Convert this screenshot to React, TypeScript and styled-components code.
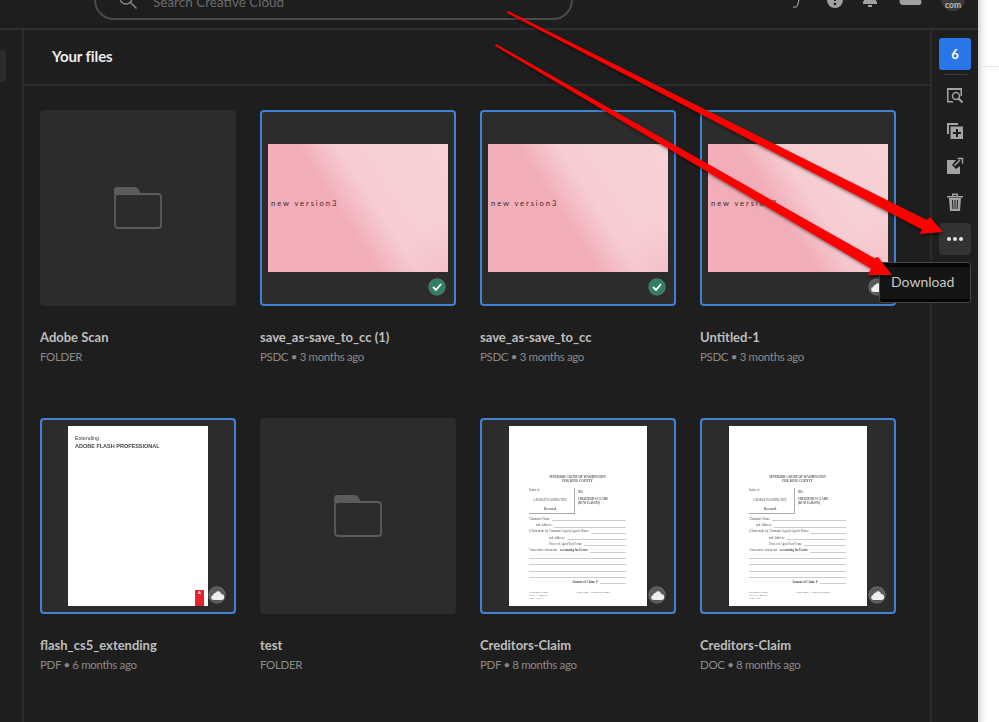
import React from "react";
import styled, { createGlobalStyle } from "styled-components";

const Global = createGlobalStyle`
  html, body { margin: 0; padding: 0; background: #fff; overflow: hidden; }
  * { box-sizing: border-box; }
`;
const Stage = styled.div`
  position: relative; width: 999px; height: 722px; overflow: hidden; display: flex;
  font-family: Lato, "Open Sans", sans-serif;
`;
const AppShell = styled.div`
  width: 978px; height: 722px; background: #1e1e1e; display: flex; flex-direction: column;
`;
const Margin = styled.div`
  flex: 1; position: relative;
  background: linear-gradient(90deg, #d4d4d4 0, #f0f0f0 4px, #fff 9px);
  &::after { content: ""; display: block; height: 1px; background: #e6e6e6; margin-top: 66px; }
`;
const TopBar = styled.header`
  height: 30px; flex: none; border-bottom: 2px solid #2f2f2f; position: relative; overflow: hidden;
  display: flex; align-items: flex-end; padding: 0 0 8px 94px;
`;
const Search = styled.div`
  width: 479px; height: 40px; flex: none; border: 2px solid #4a4a4a; border-radius: 20px;
  display: flex; align-items: flex-end; padding: 0 0 7px 22px; gap: 15px;
  color: #6a6a6a; font-size: 13.5px; line-height: 18px;
`;
const SearchGlyph = styled.svg`flex: none; margin-bottom: 1px;`;
const TopIcons = styled.div`
  margin-left: auto; display: flex; align-items: flex-end; margin-bottom: 12px;
`;
const TopIcon = styled.span<{ $w: number; $drop?: number }>`
  display: block; width: ${(p) => p.$w}px; flex: none; line-height: 0; margin-bottom: ${(p) => p.$drop ?? 0}px;
  svg { display: block; margin: 0 auto; }
`;
const Avatar = styled.div`
  width: 24px; height: 24px; border-radius: 50%; background: #3a3a3a; color: #bdbdbd; flex: none;
  font-size: 8.5px; font-weight: 700; display: flex; align-items: flex-end; justify-content: center;
  line-height: 12px; padding-bottom: 0; margin: 0 13px -3px 0;
`;
const Body = styled.div`flex: 1; display: flex; min-height: 0;`;
const LeftRail = styled.aside`
  width: 24px; flex: none; border-right: 2px solid #2b2b2b; padding-top: 20px;
`;
const RailNub = styled.div`width: 6px; height: 32px; background: #2c2c2c; border-radius: 0 3px 3px 0;`;
const Content = styled.main`flex: 1; min-width: 0; display: flex; flex-direction: column;`;
const TitleBar = styled.div`
  height: 56px; flex: none; border-bottom: 2px solid #2b2b2b; padding-left: 28px;
  display: flex; align-items: center; font-size: 15px; font-weight: 700; color: #ececec; letter-spacing: -0.1px;
  padding-bottom: 2px;
`;
const Grid = styled.div`
  display: grid; grid-template-columns: repeat(4, 196px); column-gap: 24px; row-gap: 50px;
  padding: 24px 0 0 16px;
`;
const Card = styled.article`display: flex; flex-direction: column; height: 258px;`;
const Thumb = styled.div<{ $selected?: boolean }>`
  position: relative; width: 196px; height: 196px; flex: none; background: #2c2c2c; border-radius: 4px;
  border: 2px solid ${(p) => (p.$selected ? "#3f82d6" : "transparent")};
  display: flex; align-items: center; justify-content: center;
`;
const Name = styled.div`
  margin-top: 22px; font-size: 13px; line-height: 18px; font-weight: 700; color: #bebebe; white-space: nowrap;
`;
const Meta = styled.div`
  margin-top: 3px; font-size: 11.5px; line-height: 16px; color: #8a8a8a; white-space: nowrap; letter-spacing: -0.35px;
`;
const Pink = styled.div`
  width: 180px; height: 128px; display: flex; align-items: center; padding: 0 0 10px 3px;
  font-size: 7.5px; letter-spacing: 1.95px; color: #3c282b; white-space: nowrap;
  background:
    radial-gradient(50px 50px at 100% 100%, rgba(241,170,185,.4), transparent),
    linear-gradient(57deg, #f1aeb8 0%, #f1aeb8 42%, #f7cdd3 58%, #f8d2d7 100%);
`;
const Badge = styled.span<{ $tone: "ok" | "cloud" }>`
  position: absolute; right: 9px; bottom: 9px; width: 16px; height: 16px; border-radius: 50%;
  background: ${(p) => (p.$tone === "ok" ? "#2f7f62" : "#5a5a5a")};
  box-shadow: 0 0 0 0.5px #888;
  display: flex; align-items: center; justify-content: center;
`;
const Sheet = styled.div<{ $w: number }>`
  width: ${(p) => p.$w}px; height: 180px; background: #fff; position: relative; color: #333;
  font-family: "Liberation Serif", serif;
`;
const FlashCover = styled.div`padding: 9px 7px; font-family: "Liberation Sans", sans-serif; color: #444; filter: blur(0.25px);`;
const CoverSmall = styled.div`font-size: 5.6px; line-height: 7px; letter-spacing: -0.1px;`;
const CoverBig = styled.div`font-size: 5.5px; line-height: 8px; font-weight: 700; white-space: nowrap;`;
const AdobeTag = styled.div`
  position: absolute; right: 4px; bottom: 0; width: 9px; height: 16px; background: #e8212b; color: #fff;
  font: 700 4px/6px "Liberation Sans", sans-serif; text-align: center;
`;
const DocPage = styled.div`
  padding: 49px 21px 0 20px; display: flex; flex-direction: column; height: 100%; filter: blur(0.3px);
`;
const DocHead = styled.div`font-size: 3.2px; line-height: 4px; font-weight: 700; text-align: center; white-space: nowrap; color: #555;`;
const Caption = styled.div`display: flex; margin-top: 5px; height: 27px;`;
const CaptionBox = styled.div`
  width: 46px; height: 26px; border-right: 1px solid #aaa; border-bottom: 1px solid #aaa;
  font-size: 3px; line-height: 4px; white-space: nowrap; display: flex; flex-direction: column; justify-content: space-between; padding-bottom: 2px; color: #555;
`;
const CaptionSide = styled.div`
  padding: 3px 0 0 3px; font-size: 3px; line-height: 3.5px; color: #555; white-space: nowrap; font-weight: 700;
`;
const DocRow = styled.div<{ $indent?: number }>`
  display: flex; align-items: flex-end; height: 6.3px; gap: 2px; padding-left: ${(p) => p.$indent ?? 0}px;
  font-size: 3px; line-height: 3.5px; white-space: nowrap; color: #555;
  &::after { content: ""; flex: 1; border-bottom: 1px solid #ccc; }
`;
const DocFooter = styled.div`
  display: flex; justify-content: space-between; margin-top: 7px; padding-right: 16px;
  font-size: 2.8px; line-height: 3px; color: #666;
`;
const RightRail = styled.aside`
  width: 48px; flex: none; border-left: 2px solid #2b2b2b; display: flex; flex-direction: column; align-items: center; padding-top: 8px;
`;
const CountTile = styled.div`
  width: 32px; height: 32px; border-radius: 3px; background: #2a75e8; color: #fff; font-size: 13px; font-weight: 700;
  display: flex; align-items: center; justify-content: center;
`;
const RailRule = styled.div`width: 24px; height: 1px; background: #3c3c3c; margin: 4px 0 4px;`;
const RailButton = styled.div<{ $active?: boolean }>`
  width: 32px; height: 32px; flex: none; border-radius: 4px; margin-bottom: 3.5px;
  margin-top: ${(p) => (p.$active ? "2px" : "0")}; background: ${(p) => (p.$active ? "#333" : "transparent")};
  display: flex; align-items: center; justify-content: center;
`;
const Tip = styled.div`
  position: absolute; left: 879px; top: 262px; width: 92px; height: 41px;
  background: linear-gradient(#050505 0 4px, #151515 4px 36px, #050505 36px);
  border: 1px solid #444; border-radius: 3px; color: #c8c8c8; font-size: 14px; padding: 0 0 2px 11px;
  display: flex; align-items: center;
`;
const Arrows = styled.svg`position: absolute; left: 0; top: 0; pointer-events: none;`;
const ArrowHeads = styled.g`fill: #ff0000; filter: drop-shadow(1px 2px 1.5px rgba(0,0,0,.5));`;

const Cloud = () => (
  <svg width="13" height="9" viewBox="0 0 13 9"><path fill="#eee" d="M2.600 9A2.600 2.600 0 0 1 2.100 3.900 3.200 3.200 0 0 1 5 1.500c.5-1 1.500-1.500 2.500-1.300 1.500.2 2.400 1.300 2.500 2.800A3 3 0 0 1 10.400 9Z" /></svg>
);
const Check = () => (
  <svg width="10" height="8" viewBox="0 0 10 8"><path d="M1 4l3 3 5-6" fill="none" stroke="#fff" strokeWidth="1.800" /></svg>
);
const Folder = () => (
  <svg width="48" height="42" viewBox="0 0 48 42">
    <path d="M0 7V3a3 3 0 0 1 3-3h18a4 4 0 0 1 3 1.500L27 7Z" fill="#5c5c5c" />
    <rect x="1" y="7" width="46" height="34" rx="3" fill="none" stroke="#5c5c5c" strokeWidth="1.800" />
  </svg>
);
const DocThumb = () => (
  <Sheet $w={138}>
    <DocPage>
      <DocHead>SUPERIOR COURT OF WASHINGTON<br />FOR KING COUNTY</DocHead>
      <Caption>
        <CaptionBox>
          <span>Estate of</span>
          <span>&nbsp;&nbsp;&nbsp;&nbsp;&nbsp;&nbsp;GEORGE WASHINGTON,</span>
          <span>&nbsp;&nbsp;&nbsp;&nbsp;&nbsp;&nbsp;&nbsp;&nbsp;&nbsp;&nbsp;&nbsp;&nbsp;&nbsp;&nbsp;&nbsp;&nbsp;&nbsp;&nbsp;&nbsp;&nbsp;<b>Deceased.</b></span>
        </CaptionBox>
        <CaptionSide>NO.<br /><br />CREDITOR'S CLAIM<br />(RCW 11.40.070)</CaptionSide>
      </Caption>
      <DocRow>Claimant's Name:</DocRow>
      <DocRow $indent={7}>and Address:</DocRow>
      <DocRow>(Claim made by Claimant's Agent) Agent's Name:</DocRow>
      <DocRow $indent={20}>and Address:</DocRow>
      <DocRow $indent={20}>Power of Agent/Fact Form:</DocRow>
      <DocRow>Consecutive statements <b>&nbsp;accounting for Estate:</b></DocRow>
      <DocRow /><DocRow /><DocRow /><DocRow />
      <DocRow $indent={43}><b>Amount of Claim: $</b></DocRow>
      <DocFooter><span>Creditor's Claim<br />RCW 11.40.070<br />Page 1 of 1</span><span>Print Name, Address &amp; Phone</span></DocFooter>
    </DocPage>
  </Sheet>
);
const FlashThumb = () => (
  <Sheet $w={140}>
    <FlashCover>
      <CoverSmall>Extending</CoverSmall>
      <CoverBig>ADOBE FLASH PROFESSIONAL</CoverBig>
    </FlashCover>
    <AdobeTag>A</AdobeTag>
  </Sheet>
);

type File = { name: string; meta: string; kind: "folder" | "pink" | "flash" | "doc"; badge?: "ok" | "cloud" };
const files: File[] = [
  { name: "Adobe Scan", meta: "FOLDER", kind: "folder" },
  { name: "save_as-save_to_cc (1)", meta: "PSDC • 3 months ago", kind: "pink", badge: "ok" },
  { name: "save_as-save_to_cc", meta: "PSDC • 3 months ago", kind: "pink", badge: "ok" },
  { name: "Untitled-1", meta: "PSDC • 3 months ago", kind: "pink", badge: "cloud" },
  { name: "flash_cs5_extending", meta: "PDF • 6 months ago", kind: "flash", badge: "cloud" },
  { name: "test", meta: "FOLDER", kind: "folder" },
  { name: "Creditors-Claim", meta: "PDF • 8 months ago", kind: "doc", badge: "cloud" },
  { name: "Creditors-Claim", meta: "DOC • 8 months ago", kind: "doc", badge: "cloud" },
];

const g = "#a3a3a3";

export default function App() {
  return (
    <>
      <Global />
      <Stage>
        <AppShell>
          <TopBar>
            <Search>
              <SearchGlyph width="20" height="20" viewBox="0 0 20 20"><circle cx="8" cy="8" r="6" fill="none" stroke="#8a8a8a" strokeWidth="1.400" /><path d="M12.500 12.500l6 6" stroke="#8a8a8a" strokeWidth="1.400" /></SearchGlyph>
              <span>Search Creative Cloud</span>
            </Search>
            <TopIcons>
              <TopIcon $w={26}><svg width="12" height="14" viewBox="0 0 12 14"><path d="M9 0C8 4 8 9 6 12c-.8 1.200-2 1.500-4 1" fill="none" stroke="#8e8e8e" strokeWidth="1.300" /></svg></TopIcon>
              <TopIcon $w={50}><svg width="16" height="16" viewBox="0 0 16 16"><circle cx="8" cy="8" r="8" fill="#a0a0a0" /><rect x="7" y="3" width="2" height="6" fill="#1e1e1e" /><circle cx="8" cy="12" r="1.300" fill="#1e1e1e" /></svg></TopIcon>
              <TopIcon $w={20}><svg width="18" height="18" viewBox="0 0 18 18"><path d="M9 0c3 0 4 2.500 4 5 0 3.500 2 5 3 7H2c1-2 3-3.500 3-7 0-2.500 1-5 4-5Z" fill="#a0a0a0" /><rect x="2" y="12" width="14" height="2" fill="#a0a0a0" /><rect x="7" y="15" width="4" height="2" fill="#a0a0a0" /></svg></TopIcon>
              <TopIcon $w={61} $drop={1}><svg width="24" height="16" viewBox="0 0 24 16"><path d="M4 14a3 3 0 0 1 0-7C6 2 10 0 14 1c4 .5 6 3 6 6 3 .5 3.500 7 0 7Z" fill="#a0a0a0" /></svg></TopIcon>
              <Avatar>com</Avatar>
            </TopIcons>
          </TopBar>
          <Body>
            <LeftRail><RailNub /></LeftRail>
            <Content>
              <TitleBar>Your files</TitleBar>
              <Grid>
                {files.map((f, i) => (
                  <Card key={i}>
                    <Thumb $selected={f.kind !== "folder"}>
                      {f.kind === "folder" && <Folder />}
                      {f.kind === "pink" && <Pink>new version3</Pink>}
                      {f.kind === "flash" && <FlashThumb />}
                      {f.kind === "doc" && <DocThumb />}
                      {f.badge && <Badge $tone={f.badge}>{f.badge === "ok" ? <Check /> : <Cloud />}</Badge>}
                    </Thumb>
                    <Name>{f.name}</Name>
                    <Meta>{f.meta}</Meta>
                  </Card>
                ))}
              </Grid>
            </Content>
            <RightRail>
              <CountTile>6</CountTile>
              <RailRule />
              <RailButton>
                <svg width="18" height="18" viewBox="0 0 18 18"><path d="M1 2h15v2H1ZM1 4h1.500v11H7v1.500H1ZM16 4h-1.500v6H16Z" fill={g} /><circle cx="10" cy="10" r="3.500" fill="none" stroke={g} strokeWidth="1.500" /><path d="M12.500 12.500l4 4" stroke={g} strokeWidth="2" /></svg>
              </RailButton>
              <RailButton>
                <svg width="18" height="18" viewBox="0 0 18 18"><path d="M1 1h11v2H3v9H1Z" fill={g} /><path d="M4.500 4.500H17V17H4.500Z" fill={g} /><path d="M10 7h2v3h3v2h-3v3h-2v-3H7v-2h3Z" fill="#1e1e1e" /></svg>
              </RailButton>
              <RailButton>
                <svg width="18" height="18" viewBox="0 0 18 18"><path d="M1 3h9L6 8l4 4 4-3v8H1Z" fill={g} /><path d="M8.500 8.500L14 3" fill="none" stroke={g} strokeWidth="1.400" /><path d="M11.500 1.500h5V6.500" fill="none" stroke={g} strokeWidth="1.400" /></svg>
              </RailButton>
              <RailButton>
                <svg width="18" height="20" viewBox="0 0 18 20"><path d="M1 4h16v1.500H1ZM6 4V1.500h6V4h-1.500V3h-3v1Z" fill={g} /><path d="M3 6h12l-1 13H4Z" fill={g} /><path d="M6.500 8l.4 9M9 8v9M11.500 8l-.4 9" stroke="#1e1e1e" strokeWidth="1" /></svg>
              </RailButton>
              <RailButton $active>
                <svg width="18" height="4" viewBox="0 0 18 4"><circle cx="3" cy="2" r="2" fill="#e6e6e6" /><circle cx="9" cy="2" r="2" fill="#e6e6e6" /><circle cx="15" cy="2" r="2" fill="#e6e6e6" /></svg>
              </RailButton>
            </RightRail>
          </Body>
        </AppShell>
        <Margin />
        <Tip>Download</Tip>
        <Arrows width="999" height="722" viewBox="0 0 999 722">
          <ArrowHeads>
            <path d="M508 11 927 220 930 217 943 232 920 234 922 229.500 507 13Z" />
            <path d="M496 44 874 258 878 257 892 275 868 275 871 268.500 495 46Z" />
          </ArrowHeads>
        </Arrows>
      </Stage>
    </>
  );
}
